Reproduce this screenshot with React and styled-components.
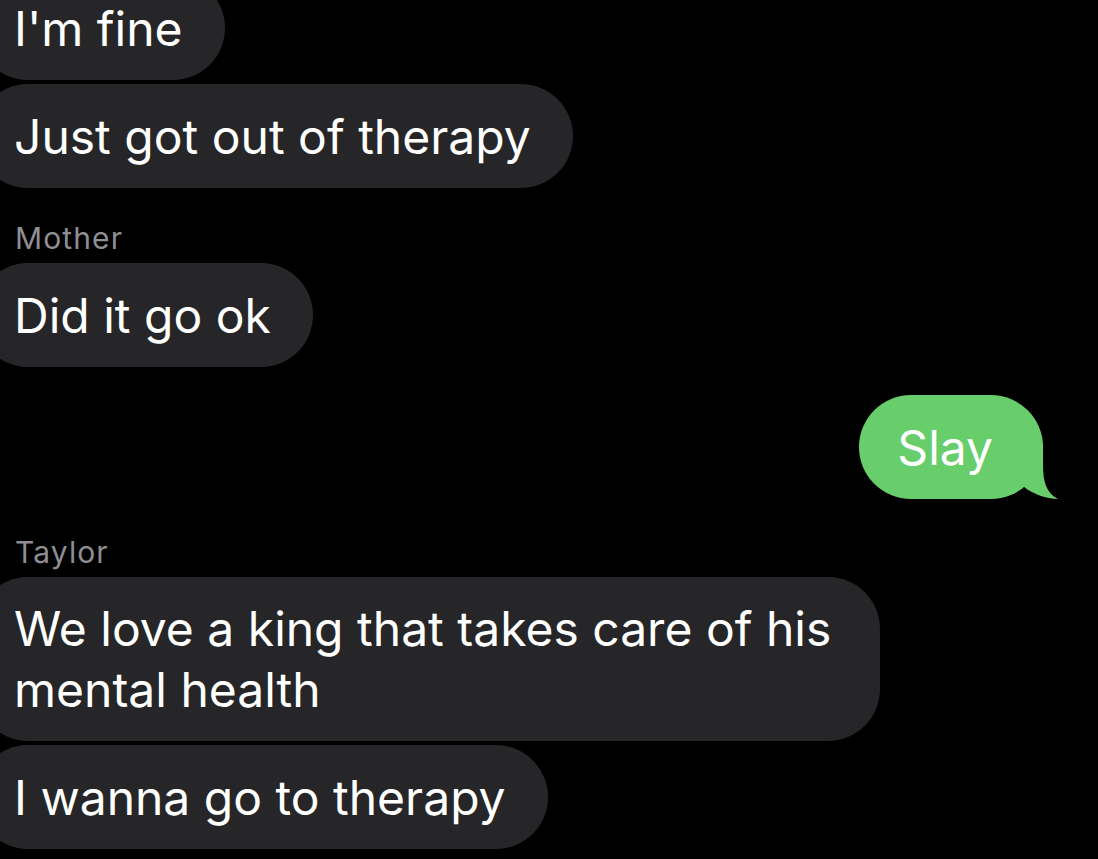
import React from "react";
import styled, { createGlobalStyle } from "styled-components";

const Global = createGlobalStyle`
  html, body { margin: 0; padding: 0; background: #000; }
  body { width: 1098px; height: 859px; overflow: hidden; }
`;

const Screen = styled.div`
  width: 1098px;
  height: 859px;
  overflow: hidden;
  background: #000;
  font-family: Inter, "Noto Sans", sans-serif;
  -webkit-font-smoothing: antialiased;
`;

const Thread = styled.div`
  display: flex;
  flex-direction: column;
  margin-top: -24px;
`;

const Group = styled.div`
  display: flex;
  flex-direction: column;
  align-items: ${(p) => (p.$out ? "flex-end" : "flex-start")};
  gap: 4px;
  margin-top: ${(p) => p.$gap || 0}px;
`;

const Sender = styled.div`
  color: #8e8e93;
  font-size: 30px;
  line-height: 34px;
  padding-left: 15px;
  margin-bottom: 4px;
  letter-spacing: 1.1px;
`;

const Bubble = styled.div`
  position: relative;
  box-sizing: border-box;
  min-height: 104px;
  max-width: 904px;
  display: flex;
  align-items: center;
  padding: 21px 42px 21px 38px;
  margin-left: -24px;
  border-radius: 52px;
  background: #262628;
  color: #fff;
  font-size: 48px;
  line-height: 61px;
  letter-spacing: 0px;
`;

const OutBubble = styled(Bubble)`
  max-width: none;
  margin-left: 0;
  margin-right: 55px;
  padding: 21px 50px 21px 38px;
  background: #68ce6b;
`;

const Tail = styled.svg`
  position: absolute;
  right: -16px;
  bottom: 0;
  width: 40px;
  height: 56px;
`;

export default function App() {
  return (
    <Screen>
      <Global />
      <Thread>
        <Group>
          <Bubble>I'm fine</Bubble>
          <Bubble>Just got out of therapy</Bubble>
        </Group>
        <Group $gap={33}>
          <Sender>Mother</Sender>
          <Bubble>Did it go ok</Bubble>
        </Group>
        <Group $out $gap={28}>
          <OutBubble>
            Slay
            <Tail viewBox="0 0 40 56">
              <path
                d="M0 0 L24 0 L24 22 C24 38 27 50 39 56 C30 56 14 52 4 43 L0 46 Z"
                fill="#68ce6b"
              />
            </Tail>
          </OutBubble>
        </Group>
        <Group $gap={36}>
          <Sender>Taylor</Sender>
          <Bubble>We love a king that takes care of his mental health</Bubble>
          <Bubble>I wanna go to therapy</Bubble>
        </Group>
      </Thread>
    </Screen>
  );
}
